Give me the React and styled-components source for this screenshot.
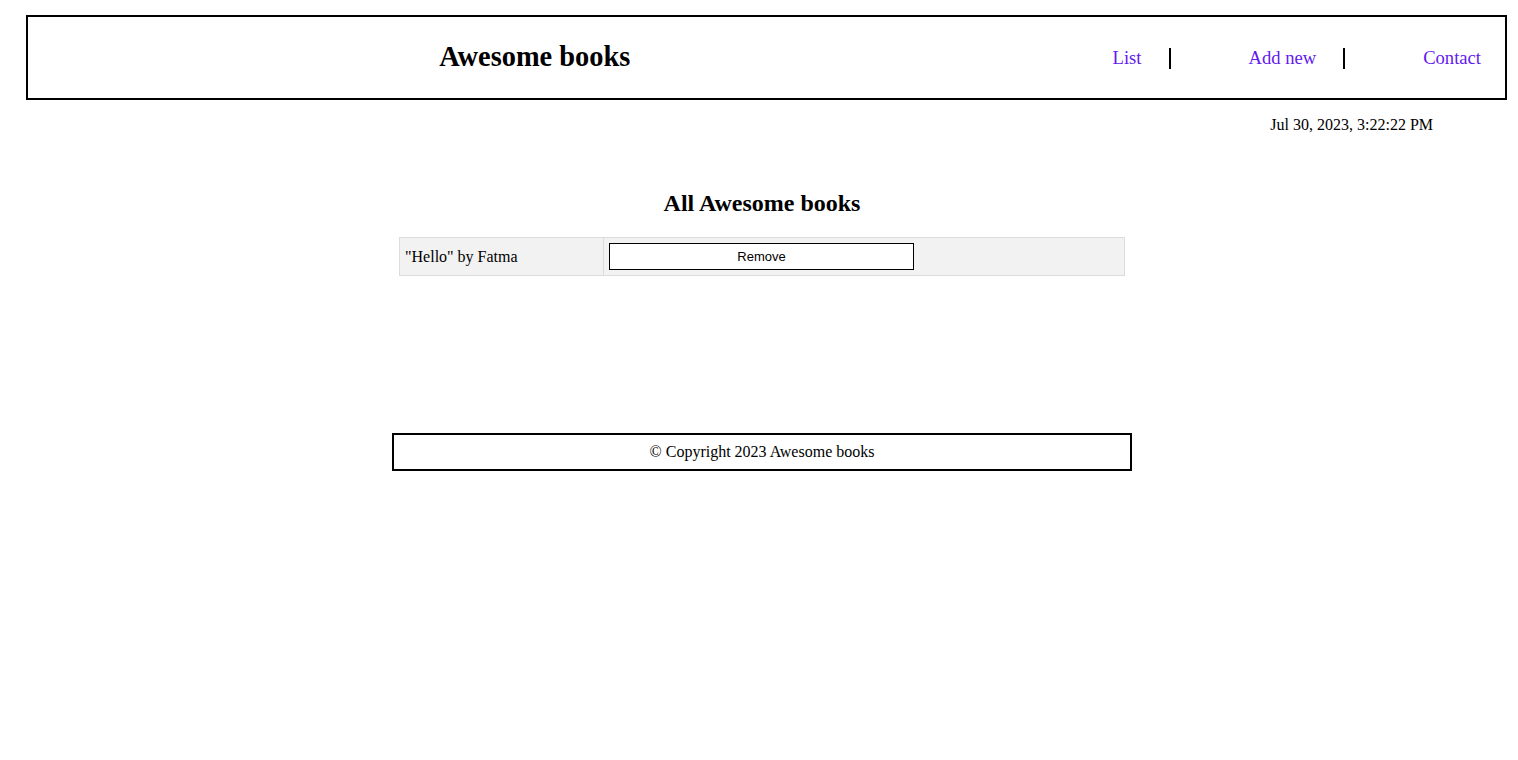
import styled, { createGlobalStyle } from "styled-components";

const GlobalStyle = createGlobalStyle`
  body {
    margin: 8px;
    font-family: "Liberation Serif", "Times New Roman", serif;
    color: #000;
    background: #fff;
  }
`;

const Page = styled.div`
  width: 1508px;
  padding-right: 109px;
`;

const Header = styled.header`
  display: flex;
  align-items: center;
  width: 1477px;
  height: 81px;
  margin: 7px 0 0 18px;
  border: 2px solid #000;
`;

const Logo = styled.h1`
  flex: 1;
  margin: 0 0 2px;
  padding-right: 42px;
  text-align: center;
  font-size: 28.4px;
  font-weight: bold;
`;

const NavList = styled.ul`
  display: flex;
  gap: 51px;
  margin: 2px 0 0;
  padding: 0;
  list-style: none;
`;

const NavItem = styled.li`
  padding: 0 ${(p) => (p.$last ? "24px" : "27px")} 0 ${(p) => (p.$first ? "29px" : "27px")};
  line-height: 20px;
  border-right: ${(p) => (p.$last ? "none" : "2px solid #000")};
`;

const NavLink = styled.a`
  color: #6319f0;
  font-size: 18.6px;
  text-decoration: none;
  cursor: pointer;
`;

const DateLine = styled.p`
  margin: 16px 0 0;
  padding-right: 83px;
  text-align: right;
  font-size: 16px;
`;

const Main = styled.main`
  display: flex;
  flex-direction: column;
  align-items: center;
`;

const Title = styled.h2`
  margin: 56px 0 20px;
  font-size: 24px;
  font-weight: bold;
`;

const BookTable = styled.table`
  width: 726px;
  border-collapse: collapse;
  background: #f2f2f2;
  border: 1px solid #dcdcdc;
`;

const Cell = styled.td`
  padding: 5px;
  font-size: 16px;
  width: ${(p) => p.$w || "auto"};
  border-right: ${(p) => (p.$divider ? "1px solid #dcdcdc" : "none")};
`;

const RemoveButton = styled.button`
  display: block;
  width: 305px;
  height: 27px;
  background: #fff;
  border: 1px solid #000;
  font-family: "Liberation Sans", Arial, sans-serif;
  font-size: 13px;
  color: #000;
`;

const Footer = styled.footer`
  width: 736px;
  height: 34px;
  margin: 157px auto 0;
  display: flex;
  align-items: center;
  justify-content: center;
  border: 2px solid #000;
  font-size: 16px;
`;

const links = ["List", "Add new", "Contact"];
const books = [{ title: "Hello", author: "Fatma" }];

export default function App() {
  return (
    <>
      <GlobalStyle />
      <Page>
        <Header>
          <Logo>Awesome books</Logo>
          <nav>
            <NavList>
              {links.map((l, i) => (
                <NavItem key={l} $first={i === 0} $last={i === links.length - 1}>
                  <NavLink>{l}</NavLink>
                </NavItem>
              ))}
            </NavList>
          </nav>
        </Header>
        <DateLine>Jul 30, 2023, 3:22:22 PM</DateLine>
        <Main>
          <Title>All Awesome books</Title>
          <BookTable>
            <tbody>
              {books.map((b) => (
                <tr key={b.title}>
                  <Cell $w="193px" $divider>
                    "{b.title}" by {b.author}
                  </Cell>
                  <Cell>
                    <RemoveButton>Remove</RemoveButton>
                  </Cell>
                </tr>
              ))}
            </tbody>
          </BookTable>
        </Main>
        <Footer>© Copyright 2023 Awesome books</Footer>
      </Page>
    </>
  );
}
